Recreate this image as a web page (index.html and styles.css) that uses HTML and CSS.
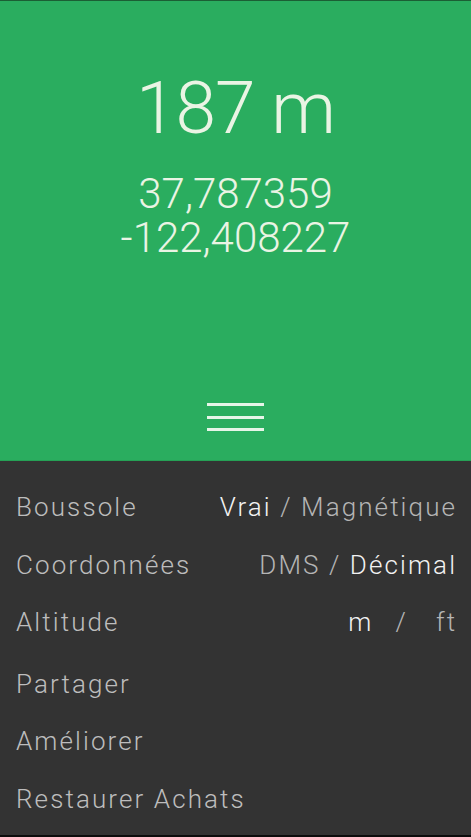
FILE: index.html
```html
<!DOCTYPE html>
<html lang="fr">
<head>
<meta charset="utf-8">
<title>Altitude</title>
<link rel="stylesheet" href="styles.css">
</head>
<body>
<div class="app">
  <section class="hero">
    <div class="altitude">187 m</div>
    <div class="coords">
      <div class="coord">37,787359</div>
      <div class="coord">-122,408227</div>
    </div>
    <div class="menu-icon" aria-label="menu">
      <span></span><span></span><span></span>
    </div>
  </section>
  <section class="settings">
    <div class="group">
      <div class="row"><span class="label">Boussole</span><span class="opts"><span class="on">Vrai</span> / Magnétique</span></div>
      <div class="row"><span class="label">Coordonnées</span><span class="opts">DMS / <span class="on">Décimal</span></span></div>
      <div class="row"><span class="label">Altitude</span><span class="opts"><span class="on">m</span><span class="sep">/</span>ft</span></div>
    </div>
    <div class="group second">
      <div class="row"><span class="label">Partager</span></div>
      <div class="row"><span class="label">Améliorer</span></div>
      <div class="row"><span class="label">Restaurer Achats</span></div>
    </div>
  </section>
</div>
</body>
</html>
```
FILE: styles.css
```css
html, body {
  margin: 0;
  padding: 0;
  background: #333333;
}
body {
  font-family: Roboto, "Liberation Sans", sans-serif;
  font-weight: 300;
}
.app {
  width: 471px;
  height: 837px;
  display: flex;
  flex-direction: column;
  border-bottom: 2px solid #0c0c0c;
  box-sizing: border-box;
}
.hero {
  height: 461px;
  box-sizing: border-box;
  background: #2aad5f;
  border-top: 1px solid #1b5e34;
  border-bottom: 1px solid #25a055;
  color: #eaf4e4;
  display: flex;
  flex-direction: column;
  align-items: center;
  padding-top: 67px;
  padding-bottom: 29px;
}
.altitude {
  font-size: 73px;
  line-height: 80px;
  font-weight: 300;
  letter-spacing: -1px;
}
.coords {
  margin-top: 24px;
  font-size: 42px;
  text-align: center;
  font-weight: 300;
}
.coord {
  line-height: 44px;
}
.menu-icon {
  margin-top: auto;
  width: 57px;
  display: flex;
  flex-direction: column;
  gap: 9.5px;
}
.menu-icon span {
  display: block;
  height: 3px;
  background: #e6f5e8;
}
.settings {
  flex: 1;
  padding: 18px 16px 0 16px;
  color: #bdbdbd;
  font-size: 26px;
  letter-spacing: 2.1px;
}
.row {
  height: 57.5px;
  line-height: 57.5px;
  display: flex;
  justify-content: space-between;
  white-space: nowrap;
}
.group.second {
  margin-top: 4px;
}
.opts {
  color: #b5b5b5;
  margin-right: -2.1px;
}
.on {
  color: #f2f2f2;
}
.sep {
  margin: 0 28px 0 22px;
}
```
